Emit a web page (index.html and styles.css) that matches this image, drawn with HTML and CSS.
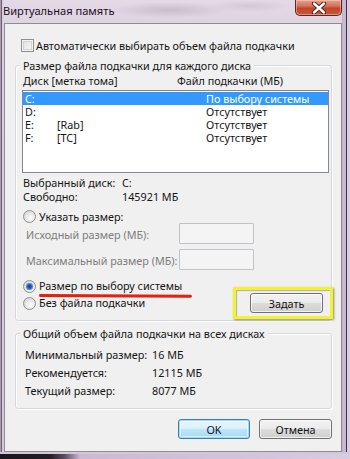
FILE: index.html
```html
<!DOCTYPE html>
<html lang="ru">
<head>
<meta charset="utf-8">
<title>Виртуальная память</title>
<link rel="stylesheet" href="styles.css">
</head>
<body>
<div class="window">
  <div class="titlebar">
    <span class="title">Виртуальная память</span>
    <div class="close">
      <svg width="18" height="12" viewBox="0 0 18 12"><path d="M4 1.5 L14 10.5 M14 1.5 L4 10.5" stroke="#3a1a14" stroke-width="4.2" stroke-linecap="round"/><path d="M4 1.5 L14 10.5 M14 1.5 L4 10.5" stroke="#ffffff" stroke-width="2.4" stroke-linecap="round"/></svg>
    </div>
  </div>
  <div class="client">
    <div class="check-row"><span class="checkbox"></span><span>Автоматически выбирать объем файла подкачки</span></div>

    <div class="group g1">
      <span class="legend">Размер файла подкачки для каждого диска</span>
      <div class="list-head"><span class="col-a">Диск [метка тома]</span><span>Файл подкачки (МБ)</span></div>
      <div class="listbox">
        <div class="row sel"><span class="c-drive">C:</span><span class="c-label"></span><span>По выбору системы</span></div>
        <div class="row"><span class="c-drive">D:</span><span class="c-label"></span><span>Отсутствует</span></div>
        <div class="row"><span class="c-drive">E:</span><span class="c-label">[Rab]</span><span>Отсутствует</span></div>
        <div class="row"><span class="c-drive">F:</span><span class="c-label">[TC]</span><span>Отсутствует</span></div>
      </div>
      <div class="info">
        <div class="info-row"><span class="info-l">Выбранный диск:</span><span>C:</span></div>
        <div class="info-row"><span class="info-l">Свободно:</span><span>145921 МБ</span></div>
      </div>
      <div class="radio-row r-first"><span class="radio"></span><span>Указать размер:</span></div>
      <div class="field"><span class="field-l">Исходный размер (МБ):</span><span class="input"></span></div>
      <div class="field f2"><span class="field-l">Максимальный размер (МБ):</span><span class="input"></span></div>
      <div class="bottom">
        <div class="radios">
          <div class="radio-row"><span class="radio on"></span><span class="underlined">Размер по выбору системы</span></div>
          <div class="radio-row"><span class="radio"></span><span>Без файла подкачки</span></div>
        </div>
        <div class="highlight"><span class="btn btn-set">Задать</span></div>
      </div>
    </div>

    <div class="group g2">
      <span class="legend">Общий объем файла подкачки на всех дисках</span>
      <div class="totals">
        <div class="t-row"><span class="t-l">Минимальный размер:</span><span>16 МБ</span></div>
        <div class="t-row"><span class="t-l">Рекомендуется:</span><span>12115 МБ</span></div>
        <div class="t-row"><span class="t-l">Текущий размер:</span><span>8077 МБ</span></div>
      </div>
    </div>

    <div class="buttons">
      <span class="btn btn-ok">OK</span>
      <span class="btn btn-cancel">Отмена</span>
    </div>
  </div>
  <div class="bottom-frame"></div>
</div>
</body>
</html>
```
FILE: styles.css
```css
* { box-sizing: border-box; }
html, body { margin: 0; padding: 0; }
body {
  font-family: "Noto Sans", Roboto, sans-serif;
  font-size: 10.8px;
  color: #141414;
  background: #d9cfdd;
  white-space: nowrap;
}
.window {
  width: 350px;
  height: 459px;
  overflow: hidden;
  background:
    linear-gradient(to right, transparent 342px, #b6a5c2 342px, #cbbbd5 343px, #c7b6d1 346px, #3b3342 346px, #3b3342 347px, #d9cfe0 347px),
    linear-gradient(to right, #e3d9e6 0, #6d5f74 1px, #6d5f74 2px, #d8cbdd 2px, transparent 4px),
    linear-gradient(to bottom, #e4dae6 0, #ddd1e1 30px, #d6c8dc 100%);
}
.titlebar {
  height: 23px;
  display: flex;
  align-items: flex-start;
  background:
    radial-gradient(ellipse 60px 8px at 170px 10px, rgba(150,140,155,0.35), transparent),
    radial-gradient(ellipse 40px 6px at 250px 6px, rgba(160,150,165,0.25), transparent);
}
.title {
  margin: 3px 0 0 3px;
  line-height: 16px;
  font-size: 11.1px;
  color: #1c0f1c;
}
.close {
  margin-left: auto;
  margin-right: 8px;
  width: 47px;
  height: 16px;
  border: 1px solid #5a2a22;
  border-top: 0;
  border-radius: 0 0 5px 5px;
  background: linear-gradient(to bottom, #e4a08c 0, #d6735a 40%, #c0452c 55%, #c9583a 100%);
  box-shadow: inset 0 0 0 1px rgba(255,220,210,0.45);
  display: flex;
  align-items: center;
  justify-content: center;
}
.client {
  margin-left: 4px;
  width: 338px;
  height: 429px;
  border: 1px solid #8f8a94;
  background: #f0f0f0;
  padding-top: 14px;
}
.check-row {
  display: flex;
  align-items: center;
  height: 14px;
  padding-left: 16px;
}
.checkbox {
  flex: none;
  width: 13px;
  height: 13px;
  margin-right: 2px;
  border: 1px solid #8e8f8f;
  background: linear-gradient(135deg, #dcdcdc, #fbfbfb);
  box-shadow: inset 0 0 0 1px #f4f4f4, inset 0 0 0 2px #d2d2d2;
}
.group {
  margin-left: 10px;
  width: 317px;
  border: 1px solid #d5d8dc;
  border-radius: 3px;
  box-shadow: inset 1px 1px 0 #fff, 1px 1px 0 #fff;
}
.g1 { margin-top: 13px; height: 256px; }
.g2 { margin-top: 12px; height: 76px; }
.legend {
  display: block;
  width: max-content;
  margin: -8px 0 0 4px;
  padding: 0 3px;
  height: 16px;
  line-height: 16px;
  background: #f0f0f0;
}
.list-head {
  display: flex;
  height: 13px;
  line-height: 13px;
  padding-left: 7px;
}
.col-a, .c-drive, .c-label, .info-l, .field-l, .t-l { flex: none; }
.col-a { width: 154px; }
.listbox {
  margin: 3px 0 0 6px;
  width: 307px;
  height: 83px;
  border: 1px solid #828790;
  background: #fff;
  padding: 1px 0;
}
.row {
  display: flex;
  height: 13px;
  line-height: 13px;
  padding-left: 2px;
}
.row.sel { background: #3399ff; color: #fff; }
.c-drive { width: 32px; }
.c-label { width: 149px; }
.info { margin-top: 3px; padding-left: 7px; }
.info-row { display: flex; height: 14px; line-height: 14px; }
.info-l { width: 99px; }
.radio-row {
  display: flex;
  align-items: center;
  height: 14px;
  padding-left: 7px;
  line-height: 14px;
}
.r-first { margin-top: 6px; height: 13px; }
.radio {
  width: 13px;
  height: 13px;
  margin-right: 3px;
  border-radius: 50%;
  border: 1px solid #8e8f8f;
  background: radial-gradient(circle at 60% 65%, #fdfdfd 0, #e3e3e3 55%, #cfcfcf 100%);
  flex: none;
}
.radio.on {
  background:
    radial-gradient(circle at 50% 50%, #1c3f7a 0, #2b62b5 2px, #6ba3e6 3.5px, transparent 4px),
    radial-gradient(circle at 60% 65%, #fdfdfd 0, #e3e3e3 55%, #cfcfcf 100%);
}
.field {
  display: flex;
  align-items: center;
  height: 21px;
  padding-left: 10px;
  color: #7c7c7c;
}
.f2 { margin-top: 5px; }
.field-l { width: 153px; padding-top: 2px; }
.input {
  flex: none;
  width: 75px;
  height: 21px;
  border: 1px solid #bfc2c6;
  border-radius: 1px;
  background: #f4f4f4;
}
.bottom {
  display: flex;
  align-items: flex-start;
  margin-top: 9px;
}
.radios { display: flex; flex-direction: column; gap: 3px; }
.underlined { position: relative; }
.underlined::after {
  content: "";
  position: absolute;
  left: 0;
  top: 15px;
  width: 153px;
  height: 3px;
  border-radius: 2px;
  background: #e4200e;
  transform: rotate(0.3deg);
  transform-origin: left center;
}
.highlight {
  flex: none;
  margin: 8px -2px 0 auto;
  width: 100px;
  border: 3px solid #f4f22a;
  padding: 3px 7px 3px 14px;
  box-shadow: 1px 1px 2px rgba(60,60,20,0.55), inset 1px 1px 1px rgba(60,60,20,0.35);
  display: flex;
}
.btn {
  flex: none;
  display: flex;
  align-items: center;
  justify-content: center;
  height: 20px;
  border: 1px solid #707070;
  border-radius: 3px;
  background: linear-gradient(to bottom, #f2f2f2 0, #ebebeb 50%, #dddddd 50%, #cfcfcf 100%);
  box-shadow: inset 0 0 0 1px rgba(255,255,255,0.7);
  color: #111;
}
.btn-set { width: 73px; }
.totals { margin-top: 6px; padding-left: 9px; display: flex; flex-direction: column; gap: 4px; }
.t-row { display: flex; height: 14px; line-height: 14px; }
.t-l { width: 127px; }
.buttons {
  display: flex;
  justify-content: flex-end;
  gap: 9px;
  margin-top: 10px;
  padding-right: 9px;
}
.btn-ok {
  width: 72px;
  border-color: #3c7fb1;
  background: linear-gradient(to bottom, #eaf6fd 0, #d9f0fc 50%, #bee6fd 50%, #a7d9f5 100%);
  box-shadow: inset 0 0 0 1px #9fdcf8, inset 0 0 0 2px rgba(255,255,255,0.5);
}
.btn-cancel { width: 73px; }
.bottom-frame {
  height: 7px;
  background: linear-gradient(to right, #1a171c 0, #221e24 50px, #5a5060 65px, #c9bad2 80px, #d8cce0 100%);
  border-top: 2px solid #d3c6da;
}
```
